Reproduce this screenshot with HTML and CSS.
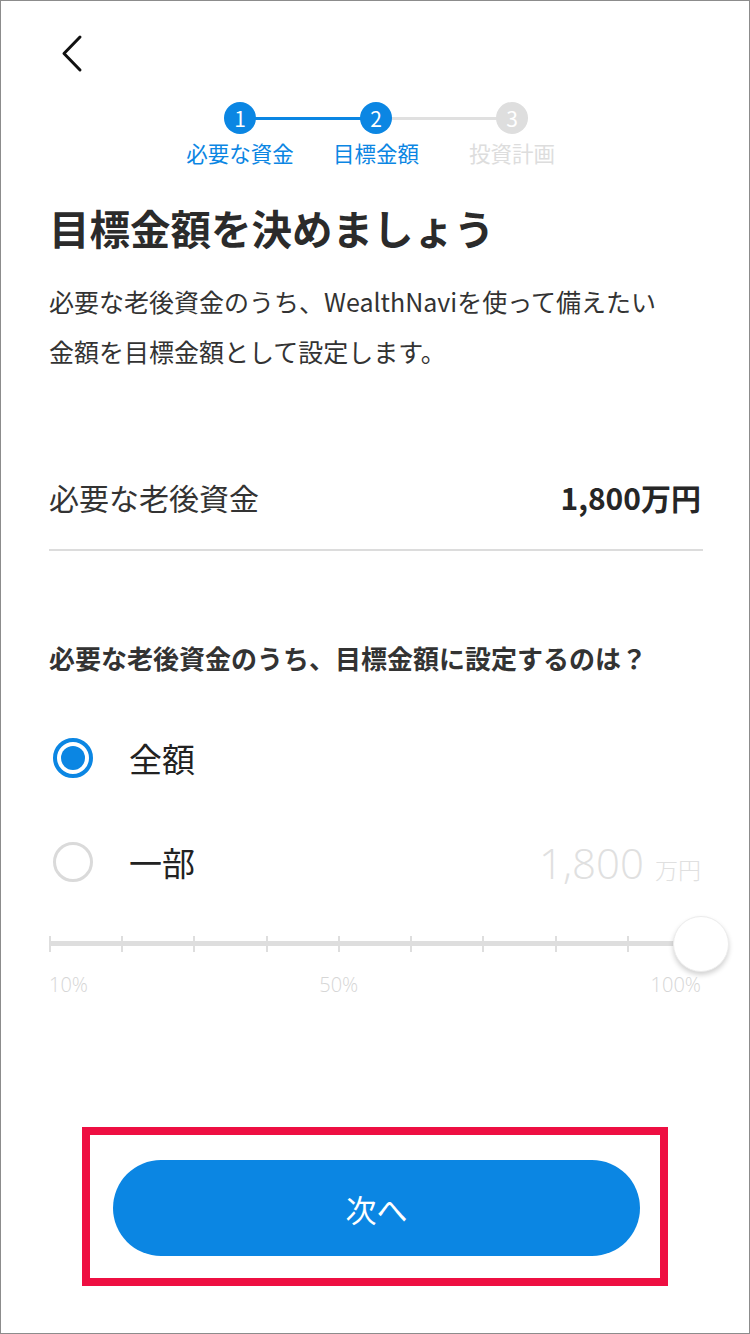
FILE: index.html
```html
<!DOCTYPE html>
<html lang="ja">
<head>
    <meta charset="UTF-8">
    <meta name="viewport" content="width=device-width, initial-scale=1.0">
    <title>目標金額を決めましょう</title>
    <link rel="stylesheet" href="styles.css">
</head>
<body>
    <div class="screen">
        <div class="topbar">
            <a class="back" href="#" aria-label="戻る">
                <svg width="24" height="40" viewBox="0 0 24 40">
                    <polyline points="19,3 3,19.5 19,36" fill="none" stroke="#111" stroke-width="3" stroke-linecap="round" stroke-linejoin="round"/>
                </svg>
            </a>
        </div>

        <ol class="stepper">
            <li class="step done line-on">
                <span class="step-num">1</span>
                <span class="step-label">必要な資金</span>
            </li>
            <li class="step done">
                <span class="step-num">2</span>
                <span class="step-label">目標金額</span>
            </li>
            <li class="step">
                <span class="step-num">3</span>
                <span class="step-label">投資計画</span>
            </li>
        </ol>

        <div class="content">
            <h1>目標金額を決めましょう</h1>
            <p class="lead">必要な老後資金のうち、WealthNaviを使って備えたい<br>金額を目標金額として設定します。</p>

            <div class="summary-row">
                <span>必要な老後資金</span>
                <strong>1,800万円</strong>
            </div>

            <h2 class="question">必要な老後資金のうち、目標金額に設定するのは？</h2>

            <div class="options">
                <label class="option">
                    <span class="radio checked"></span>
                    <span class="option-text">全額</span>
                </label>
                <label class="option">
                    <span class="radio"></span>
                    <span class="option-text">一部</span>
                    <span class="amount">1,800<small>万円</small></span>
                </label>
            </div>

            <div class="slider">
                <div class="track"></div>
                <div id="ticks"></div>
                <div class="thumb"></div>
            </div>
            <div class="slider-labels" id="scale"></div>
        </div>

        <div class="highlight">
            <button class="next-btn">次へ</button>
        </div>
    </div>

    <script>
        // tick marks: 10% .. 100%
        const ticks = document.getElementById('ticks');
        for (let i = 0; i < 10; i++) {
            const tick = document.createElement('span');
            tick.className = 'tick';
            tick.style.left = (i / 9 * 100) + '%';
            ticks.appendChild(tick);
        }

        // scale labels under the slider
        const scale = document.getElementById('scale');
        [10, 50, 100].forEach((pct, idx, list) => {
            const label = document.createElement('span');
            label.textContent = pct + '%';
            if (idx === 0) {
                label.className = 'first';
            } else if (idx === list.length - 1) {
                label.className = 'last';
            } else {
                label.className = 'mid';
                label.style.left = ((pct - 10) / 90 * 100) + '%';
            }
            scale.appendChild(label);
        });
    </script>
</body>
</html>
```

FILE: styles.css
```css
body {
    margin: 0;
    padding: 0;
    background-color: #fff;
    color: #333;
    font-family: "Noto Sans CJK JP", "Noto Sans", sans-serif;
}

.screen {
    width: 750px;
    height: 1334px;
    box-sizing: border-box;
    border: 1px solid #8c8c8c;
    display: flex;
    flex-direction: column;
    overflow: hidden;
}

.topbar {
    height: 101px;
    padding: 33px 0 0 60px;
    box-sizing: border-box;
}

.back {
    display: block;
    width: 24px;
    height: 40px;
}

.stepper {
    list-style: none;
    margin: 0;
    padding: 0;
    display: flex;
    justify-content: center;
    padding-left: 2px;
}

.step {
    position: relative;
    width: 136px;
    display: flex;
    flex-direction: column;
    align-items: center;
    color: #ddd;
}

.step:not(:last-child)::after {
    content: "";
    position: absolute;
    top: 15px;
    left: 50%;
    width: 100%;
    height: 3px;
    background-color: #e0e0e0;
    z-index: 0;
}

.step.line-on::after {
    background-color: #0b86e3;
}

.step-num {
    position: relative;
    z-index: 1;
    width: 32px;
    height: 32px;
    border-radius: 50%;
    background-color: #dedede;
    color: #fff;
    font-size: 21px;
    line-height: 32px;
    text-align: center;
}

.step.done .step-num {
    background-color: #0b86e3;
}

.step-label {
    margin-top: 5px;
    font-size: 21.5px;
    line-height: 28px;
    white-space: nowrap;
}

.step.done .step-label {
    color: #0b86e3;
}

.content {
    padding: 0 48px;
}

h1 {
    margin: 33px 0 0;
    font-size: 40.5px;
    line-height: 56px;
    font-weight: bold;
    color: #2b2b2b;
}

.lead {
    margin: 20px 0 0;
    font-size: 25px;
    line-height: 50px;
    color: #333;
}

.summary-row {
    margin-top: 101px;
    padding-bottom: 32px;
    border-bottom: 2px solid #dcdcdc;
    display: flex;
    justify-content: space-between;
    align-items: center;
    font-size: 30px;
    line-height: 40px;
    margin-right: -2px;
}

.summary-row strong {
    font-size: 30px;
    font-weight: 600;
    color: #262626;
    margin-right: 2px;
}

.question {
    margin: 89px 0 0;
    font-size: 26px;
    line-height: 36px;
    font-weight: bold;
    color: #333;
}

.options {
    margin-top: 30px;
}

.option {
    display: flex;
    align-items: center;
    height: 104px;
}

.radio {
    width: 40px;
    height: 40px;
    box-sizing: border-box;
    border: 3px solid #dadada;
    border-radius: 50%;
    margin-left: 4px;
    display: flex;
    align-items: center;
    justify-content: center;
}

.radio.checked {
    border: 4px solid #0b86e3;
}

.radio.checked::after {
    content: "";
    width: 24px;
    height: 24px;
    border-radius: 50%;
    background-color: #0b86e3;
}

.option-text {
    margin-left: 36px;
    font-size: 33px;
    color: #222;
}

.amount {
    margin-left: auto;
    font-family: "Open Sans", "Noto Sans CJK JP", sans-serif;
    font-weight: 300;
    font-size: 42px;
    color: #e0e0e0;
    display: flex;
    align-items: baseline;
}

.amount small {
    font-family: "Noto Sans CJK JP", sans-serif;
    font-size: 23px;
    margin-left: 11px;
}

.slider {
    position: relative;
    height: 56px;
    margin-top: 2px;
}

.track {
    position: absolute;
    left: 0;
    right: 0;
    top: 25px;
    height: 5px;
    background-color: #dedede;
}

#ticks {
    position: absolute;
    left: 1px;
    right: 1px;
    top: 20px;
    height: 16px;
}

.tick {
    position: absolute;
    top: 0;
    width: 2px;
    height: 16px;
    margin-left: -1px;
    background-color: #dedede;
}

.thumb {
    position: absolute;
    right: -28px;
    top: 0;
    width: 56px;
    height: 56px;
    border-radius: 50%;
    background-color: #fff;
    border: 1px solid #ececec;
    box-sizing: border-box;
    box-shadow: 0 3px 5px rgba(0, 0, 0, 0.18);
}

.slider-labels {
    position: relative;
    height: 26px;
    font-family: "Open Sans", "Noto Sans CJK JP", sans-serif;
    font-weight: 300;
    font-size: 20px;
    line-height: 26px;
    color: #d6d6d6;
}

.slider-labels span {
    position: absolute;
    top: 0;
}

.slider-labels .first {
    left: 0;
}

.slider-labels .mid {
    transform: translateX(-50%);
}

.slider-labels .last {
    right: 0;
}

.highlight {
    margin: 129px 0 0 81px;
    width: 586px;
    height: 159px;
    box-sizing: border-box;
    border: 8px solid #ee0f42;
    padding: 25px 20px 0 23px;
}

.next-btn {
    display: block;
    width: 527px;
    height: 96px;
    border: none;
    border-radius: 48px;
    background-color: #0b86e3;
    color: #fff;
    font-family: inherit;
    font-size: 31px;
    cursor: pointer;
}
```
